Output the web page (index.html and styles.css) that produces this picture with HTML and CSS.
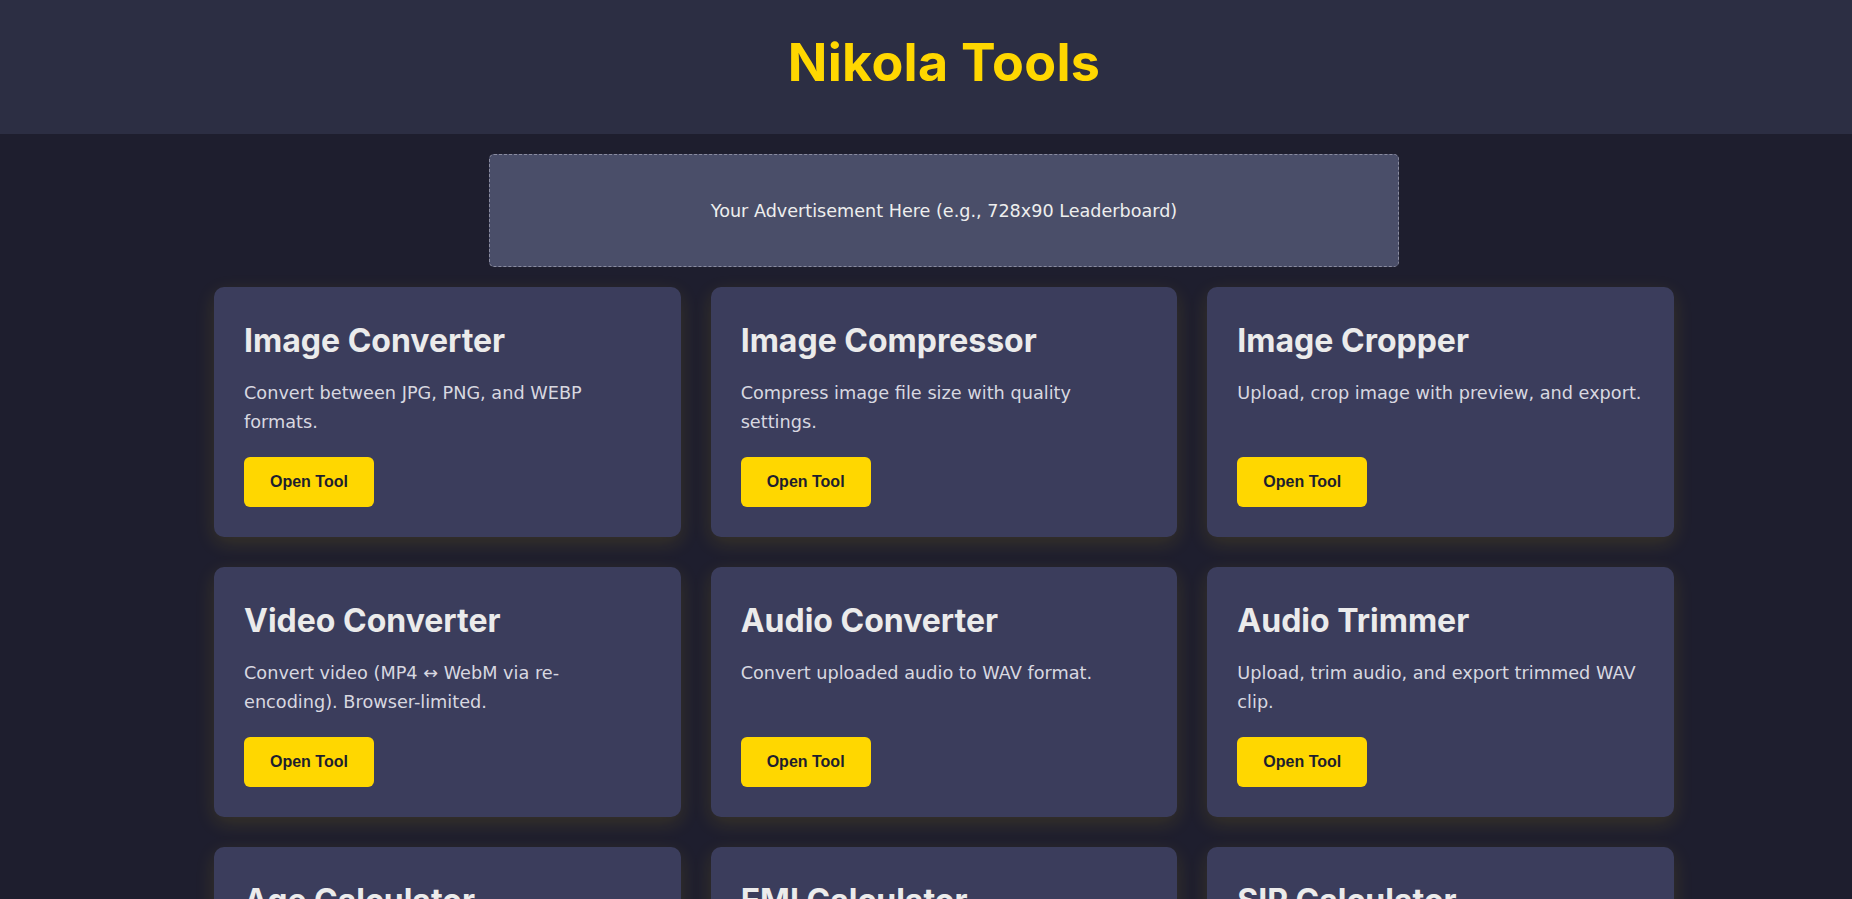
FILE: index.html
```html
<!DOCTYPE html>
<html lang="en">
<head>
    <meta charset="UTF-8">
    <meta name="viewport" content="width=device-width, initial-scale=1.0">
    <title>Nikola Tools</title>
    <link rel="stylesheet" href="styles.css">
</head>
<body>
    <header class="site-header">
        <h1>Nikola Tools</h1>
    </header>

    <main class="content">
        <!-- AD SLOT -->
        <div class="ad-slot">Your Advertisement Here (e.g., 728x90 Leaderboard)</div>

        <!-- TOOLS -->
        <div class="tools-grid">
            <div class="tool-card">
                <h2>Image Converter</h2>
                <p>Convert between JPG, PNG, and WEBP formats.</p>
                <button onclick="location.href='image-converter.html'">Open Tool</button>
            </div>
            <div class="tool-card">
                <h2>Image Compressor</h2>
                <p>Compress image file size with quality settings.</p>
                <button onclick="location.href='image-compressor.html'">Open Tool</button>
            </div>
            <div class="tool-card">
                <h2>Image Cropper</h2>
                <p>Upload, crop image with preview, and export.</p>
                <button onclick="location.href='image-cropper.html'">Open Tool</button>
            </div>
            <div class="tool-card">
                <h2>Video Converter</h2>
                <p>Convert video (MP4 ↔ WebM via re-encoding). Browser-limited.</p>
                <button onclick="location.href='video-converter.html'">Open Tool</button>
            </div>
            <div class="tool-card">
                <h2>Audio Converter</h2>
                <p>Convert uploaded audio to WAV format.</p>
                <button onclick="location.href='audio-converter.html'">Open Tool</button>
            </div>
            <div class="tool-card">
                <h2>Audio Trimmer</h2>
                <p>Upload, trim audio, and export trimmed WAV clip.</p>
                <button onclick="location.href='audio-trimmer.html'">Open Tool</button>
            </div>
            <div class="tool-card">
                <h2>Age Calculator</h2>
                <p>Find your exact age in years, months, and days.</p>
                <button onclick="location.href='age-calculator.html'">Open Tool</button>
            </div>
            <div class="tool-card">
                <h2>EMI Calculator</h2>
                <p>Calculate monthly loan EMI, interest, and total payment.</p>
                <button onclick="location.href='emi-calculator.html'">Open Tool</button>
            </div>
            <div class="tool-card">
                <h2>SIP Calculator</h2>
                <p>Estimate returns on monthly SIP investments.</p>
                <button onclick="location.href='sip-calculator.html'">Open Tool</button>
            </div>
        </div>
    </main>
</body>
</html>
```

FILE: styles.css
```css
body {
    margin: 0;
    font-family: "DejaVu Sans", "Open Sans", sans-serif;
    background-color: #1e1e2e;
    color: #eeeeee;
    font-feature-settings: "calt" 0;
}
.site-header {
    background-color: #2c2e43;
    padding: 33px 0 41px 36px;
    text-align: center;
}
.site-header h1 {
    margin: 0;
    font-family: Inter, sans-serif;
    font-size: 52px;
    line-height: 60px;
    font-weight: 700;
    letter-spacing: 0.3px;
    color: #ffd700;
}
.content {
    padding-left: 36px;
}
.ad-slot {
    width: 908px;
    height: 111px;
    margin: 20px auto 0;
    display: flex;
    justify-content: center;
    align-items: center;
    background-color: #4a4e69;
    border: 1px dashed #8a8ca0;
    border-radius: 5px;
    font-size: 17.6px;
    color: #eeeeee;
}
.tools-grid {
    width: 1460px;
    margin: 20px auto;
    display: grid;
    grid-template-columns: repeat(3, 1fr);
    gap: 30px;
}
.tool-card {
    background-color: #3b3d5c;
    border-radius: 10px;
    padding: 30px;
    display: flex;
    flex-direction: column;
    align-items: flex-start;
    box-shadow: 0 6px 20px rgba(255, 215, 0, 0.12);
}
.tool-card h2 {
    margin: 6px 0 20px;
    font-family: Inter, sans-serif;
    font-size: 32px;
    line-height: 36px;
    font-weight: 700;
    color: #ebebeb;
}
.tool-card p {
    margin: 0 0 21px;
    font-size: 17.7px;
    line-height: 28.5px;
    color: #d8d8e0;
    flex-grow: 1;
}
.tool-card button {
    padding: 16px 26px;
    background-color: #ffd700;
    color: #1e1e2e;
    border: none;
    border-radius: 6px;
    font-family: "Liberation Sans", Arial, sans-serif;
    font-size: 16px;
    font-weight: 700;
    cursor: pointer;
}
.tool-card button:hover {
    background-color: #ffe033;
}
```
